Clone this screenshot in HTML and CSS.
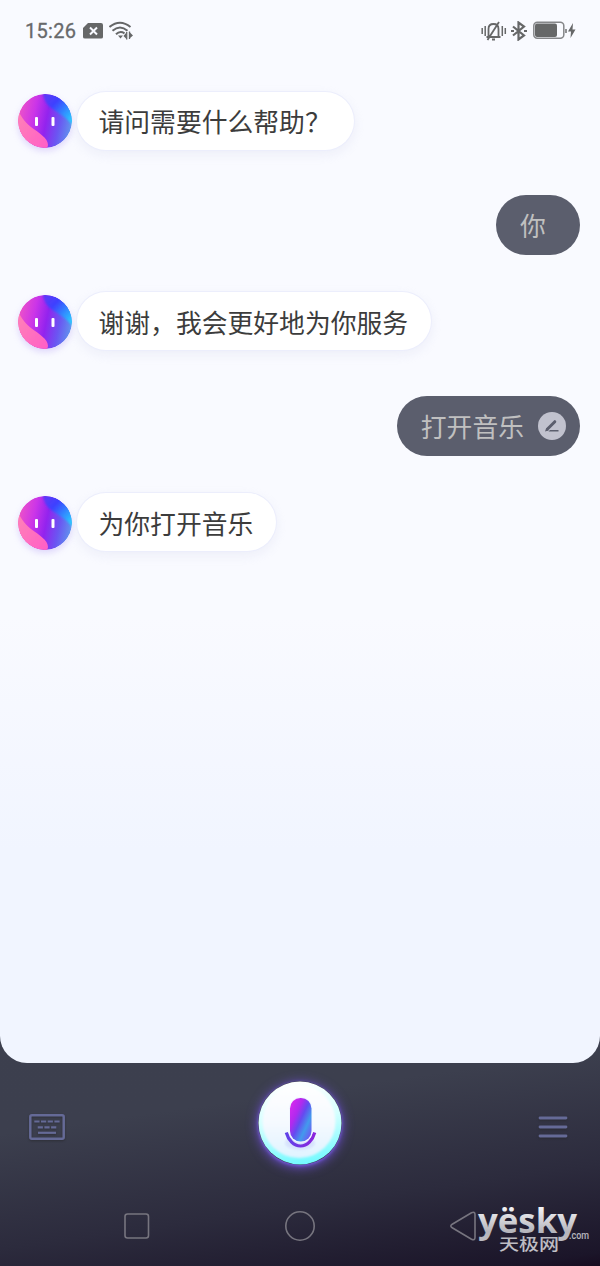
FILE: index.html
```html
<!DOCTYPE html>
<html lang="zh-CN">
<head>
<meta charset="utf-8">
<title>语音助手</title>
<link rel="stylesheet" href="styles.css">
</head>
<body>
<svg class="defs" width="0" height="0" aria-hidden="true">
  <defs>
    <linearGradient id="orb" x1="0" y1=".4" x2="1" y2=".6">
      <stop offset="0" stop-color="#ed52c8"/><stop offset=".28" stop-color="#cb35e8"/><stop offset=".52" stop-color="#9323ee"/><stop offset=".76" stop-color="#6b55f2"/><stop offset="1" stop-color="#5f95ee"/>
    </linearGradient>
    <linearGradient id="orbBlue" x1="0" y1="0" x2="1" y2="1">
      <stop offset="0" stop-color="#6835f5"/><stop offset=".35" stop-color="#3d42ff"/><stop offset=".8" stop-color="#27c8ff"/>
    </linearGradient>
    <linearGradient id="orbPink" x1="0" y1="0" x2="1" y2="1">
      <stop offset="0" stop-color="#ff86b4"/><stop offset="1" stop-color="#ff5cc8"/>
    </linearGradient>
    <clipPath id="orbClip"><circle cx="27" cy="27" r="27"/></clipPath>
    <filter id="soft"><feGaussianBlur stdDeviation="1.3"/></filter>
    <filter id="softer"><feGaussianBlur stdDeviation=".5"/></filter>
    <symbol id="avatar" viewBox="0 0 54 54">
      <g clip-path="url(#orbClip)">
        <rect width="54" height="54" fill="url(#orb)"/>
        <path d="M24 -3c2 9 4 14 12 19s15 9 22 20V-3z" fill="url(#orbBlue)" filter="url(#soft)"/>
        <path d="M-3 12c4 6 8 15 16 21s17 11 17 18l-2 8H-3z" fill="url(#orbPink)" filter="url(#softer)"/>
      </g>
      <rect x="17" y="23" width="3" height="9" rx="1" fill="#fff"/>
      <rect x="33.500" y="23" width="3" height="9" rx="1" fill="#fff"/>
    </symbol>
  </defs>
</svg>

<div class="screen">
  <section class="panel">
    <header class="status">
      <div class="status-left">
        <span class="clock">15:26</span>
        <svg class="nosim" width="20" height="16" viewBox="0 0 20 16"><path d="M5 0h13q2 0 2 2v12q0 1.500-2 1.500H2q-2 0-2-1.500V5z" fill="#666768"/><path d="M7 4.500l7 7m0-7l-7 7" stroke="#f8f9ff" stroke-width="2"/></svg>
        <svg width="25" height="20" viewBox="0 0 25 20" fill="none" stroke="#666768" stroke-width="2"><path d="M.5 6q10.500-8.500 21 0M3.500 9.800q7.500-6.500 15 0M7 13.300q4-4 8.500-1"/><path d="M9 14.500h5l-2.500 3z" fill="#666768" stroke="none"/><path d="M17.700 11v7.500m2.800-8v7.500" stroke-width="1.300"/><path d="M17 12v5.500L14.500 15zM21 11.500V17l3-2.500z" fill="#666768" stroke="none"/></svg>
      </div>
      <div class="status-right">
        <svg width="26" height="20" viewBox="0 0 26 20" fill="none" stroke="#666768" stroke-width="1.500"><path d="M1.200 7v6M4.200 5v10M21.300 5v10M24.300 7v6"/><path d="M5.500 16h14M7.500 16V8q0-5 5-5t5 5v8M11 18.500h3M6.500 19L18 1" stroke-width="1.800"/></svg>
        <svg class="bt" width="16" height="20" viewBox="0 0 16 20" fill="none" stroke="#666768" stroke-width="2.200"><path d="M2 5.500l11 9-5.500 4V1.500L13 5.500l-11 9"/><path d="M0 10h3m10 0h3"/></svg>
        <svg width="43" height="20" viewBox="0 0 43 20" fill="none" stroke="#858689" stroke-width="1.500"><rect x=".8" y="1.300" width="30" height="16" rx="3.500"/><rect x="2" y="2.500" width="22" height="13.500" rx="2" fill="#666768" stroke="none"/><path d="M33 8v4" stroke-width="1.800"/><path d="M40 2l-5 8.500h3l-.5 6.500 5-8.500h-3z" fill="#666768" stroke="none"/></svg>
      </div>
    </header>

    <main class="chat">
      <div class="row bot"><svg class="avatar"><use href="#avatar"/></svg><p class="bubble">请问需要什么帮助？</p></div>
      <div class="row user"><p class="bubble short">你</p></div>
      <div class="row bot"><svg class="avatar"><use href="#avatar"/></svg><p class="bubble">谢谢，我会更好地为你服务</p></div>
      <div class="row user editable"><p class="bubble">打开音乐
        <svg class="edit" width="28" height="28" viewBox="0 0 28 28"><circle cx="14" cy="14" r="14" fill="#c1c2ce"/><path d="M9.500 17L16.800 9.700" stroke="#5b5e6d" stroke-width="3" stroke-linecap="round"/><path d="M7 19.500l1.200-3.500 2.500 2.500zM12 18h8.500v1.500H10.500z" fill="#5b5e6d"/></svg></p></div>
      <div class="row bot"><svg class="avatar"><use href="#avatar"/></svg><p class="bubble">为你打开音乐</p></div>
    </main>
  </section>

  <footer class="dock">
    <div class="controls">
      <svg class="tool" width="36" height="27" viewBox="0 0 36 27" fill="none" stroke="#656a97"><rect x="1.300" y="1.300" width="33.400" height="23.400" rx="1.500" stroke-width="2.500"/><path d="M5.300 7.500h25.500" stroke-width="2.200" stroke-dasharray="5.200 1.500"/><path d="M8.700 13.300h18.600" stroke-width="2.200" stroke-dasharray="5.200 1.500"/><path d="M9 18.800h18" stroke-width="2.200"/></svg>
      <div class="mic">
        <svg width="84" height="84" viewBox="0 0 84 84">
          <defs>
            <linearGradient id="ring" x1=".4" y1="0" x2=".55" y2="1"><stop offset="0" stop-color="#fff"/><stop offset=".45" stop-color="#d5ffff"/><stop offset="1" stop-color="#72faff"/></linearGradient>
            <linearGradient id="face" x1="0" y1="0" x2="0" y2="1"><stop offset="0" stop-color="#fff"/><stop offset=".55" stop-color="#f4f9ff"/><stop offset="1" stop-color="#dff3ff"/></linearGradient>
            <linearGradient id="capsule" x1="0" y1=".15" x2="1" y2=".85" gradientTransform="rotate(8 .5 .5)"><stop offset="0" stop-color="#d829ee"/><stop offset=".3" stop-color="#b02aee"/><stop offset=".5" stop-color="#654af0"/><stop offset=".74" stop-color="#429aed"/><stop offset="1" stop-color="#7254f3"/></linearGradient>
            <linearGradient id="stand"><stop stop-color="#6042e8"/><stop offset="1" stop-color="#8c24dc"/></linearGradient>
          </defs>
          <circle cx="42" cy="42" r="41.500" fill="url(#ring)"/>
          <circle cx="41" cy="40.500" r="36.500" fill="url(#face)" filter="url(#soft)"/>
          <ellipse cx="42" cy="62" rx="15" ry="7" fill="#cdd7fb" opacity=".6" filter="url(#soft)"/>
          <path d="M28.300 51.500c2 7.500 7.500 13.500 14.200 13.500s12.200-6 14.200-13.500" fill="none" stroke="url(#stand)" stroke-width="3.200"/>
          <rect x="31" y="16" width="23.500" height="45.500" rx="11.500" fill="#f2f7ff"/>
          <rect x="32" y="17" width="21.500" height="43.500" rx="10.500" fill="url(#capsule)"/>
        </svg>
      </div>
      <svg class="tool" width="30" height="24" viewBox="0 0 30 24"><path d="M2 2h26M2 11h26M2 20h26" stroke="#656a97" stroke-width="2.800" stroke-linecap="round"/></svg>
    </div>
    <nav class="nav">
      <svg width="26" height="26" viewBox="0 0 26 26"><rect x="1" y="1" width="23.500" height="24" rx="2.500"/></svg>
      <svg width="30" height="30" viewBox="0 0 30 30"><circle cx="15" cy="15" r="14.200"/></svg>
      <svg width="26" height="30" viewBox="0 0 26 30"><path d="M2.200 13.300L21.500 1.800q3.500-1.600 3.500 2v22.400q0 3.600-3.500 2L2.200 16.700q-2.800-1.700 0-3.400z"/></svg>
    </nav>
    <svg class="watermark" width="122" height="60" viewBox="0 0 122 60">
      <defs><linearGradient id="metal" gradientUnits="userSpaceOnUse" x1="0" y1="8" x2="0" y2="55"><stop offset="0" stop-color="#f2f2f4"/><stop offset=".5" stop-color="#b5b5bc"/><stop offset="1" stop-color="#c4c4ca"/></linearGradient></defs>
      <g fill="url(#metal)">
        <text class="brand" x="0" y="33" textLength="99" lengthAdjust="spacingAndGlyphs">yësky</text>
        <text class="domain" x="91" y="38.500" textLength="20" lengthAdjust="spacingAndGlyphs">.com</text>
        <text class="brand-cn" x="21" y="50" textLength="60" lengthAdjust="spacingAndGlyphs">天极网</text>
      </g>
    </svg>
  </footer>
</div>
</body>
</html>
```
FILE: styles.css
```css
* { box-sizing: border-box; }
body { margin: 0; font-family: Roboto, "Noto Sans CJK SC", sans-serif; }
svg { display: block; flex: none; }
.defs { position: absolute; }

.screen {
  width: 600px;
  height: 1266px;
  display: flex;
  flex-direction: column;
  overflow: hidden;
  background: linear-gradient(172deg, #3e414f 0, #3c3f4e 84%, #2c2b3d 92.500%, #1b1529 99%, #170c20 100%);
}
.panel {
  height: 1063px;
  flex: none;
  border-radius: 0 0 27px 27px;
  background: linear-gradient(#f9faff 0, #f9faff 58%, #f1f5ff 80%, #f1f5ff 100%);
}

.status {
  height: 62px;
  padding: 0 24px 0 25px;
  display: flex;
  justify-content: space-between;
  align-items: center;
}
.status-left, .status-right { display: flex; align-items: center; }
.clock {
  width: 51px;
  font-size: 20px;
  line-height: 24px;
  color: #68696b;
  letter-spacing: .3px;
  -webkit-text-stroke: .3px #68696b;
}
.nosim { margin: 0 6px 0 7px; }
.bt { margin: 0 6px 0 4px; }

.chat { padding: 30px 20px 0 18px; }
.row { display: flex; align-items: center; }
.bubble {
  margin: 0;
  display: flex;
  align-items: center;
  font: 400 25.800px "Noto Sans CJK SC", sans-serif;
  line-height: 38px;
  white-space: nowrap;
}
.avatar { width: 54px; height: 54px; border-radius: 50%; box-shadow: 0 3px 6px #b9a8f66b; }
.bot .bubble {
  height: 58px;
  margin-left: 5px;
  padding: 0 23px 0 21.500px;
  border-radius: 29px;
  color: #3c3c3c;
  background: #fff;
  box-shadow: 0 0 0 1px #eceefc, 0 4px 12px #d9dcee66;
}
.user { justify-content: flex-end; margin-top: 45px; }
.user .bubble {
  height: 60px;
  padding: 0 14px 0 24px;
  gap: 14px;
  border-radius: 30px;
  color: #c0c0c0;
  background: #5b5e6d;
}
.user .short { width: 84px; }
.user + .bot { margin-top: 37px; }
.user + .bot .avatar { margin-top: 1px; }
.user + .bot .bubble { padding-top: 2px; }
.editable { margin-top: 46px; }

.dock { height: 203px; position: relative; }
.controls {
  height: 120px;
  padding: 0 30px 0 29px;
  display: grid;
  grid-template-columns: 1fr 84px 1fr;
  align-items: center;
}
.controls .tool { margin-top: 9px; filter: drop-shadow(0 1px 1px #2228); }
.controls .tool:last-child { justify-self: end; margin-right: 2px; }
.mic { border-radius: 50%; box-shadow: 0 2px 12px #7150dc, 0 1px 3px #7d68e0; }
.nav {
  height: 86px;
  padding: 0 124px;
  display: flex;
  justify-content: space-between;
  align-items: center;
}
.nav svg { fill: none; stroke: #77757f; stroke-width: 1.600px; }
.watermark { position: absolute; left: 478px; top: 137px; overflow: visible; }
.brand { font: 700 34px "Open Sans", sans-serif; }
.domain { font: 500 11px Roboto, sans-serif; }
.brand-cn { font: 500 16px "Noto Sans CJK SC", sans-serif; }
```
